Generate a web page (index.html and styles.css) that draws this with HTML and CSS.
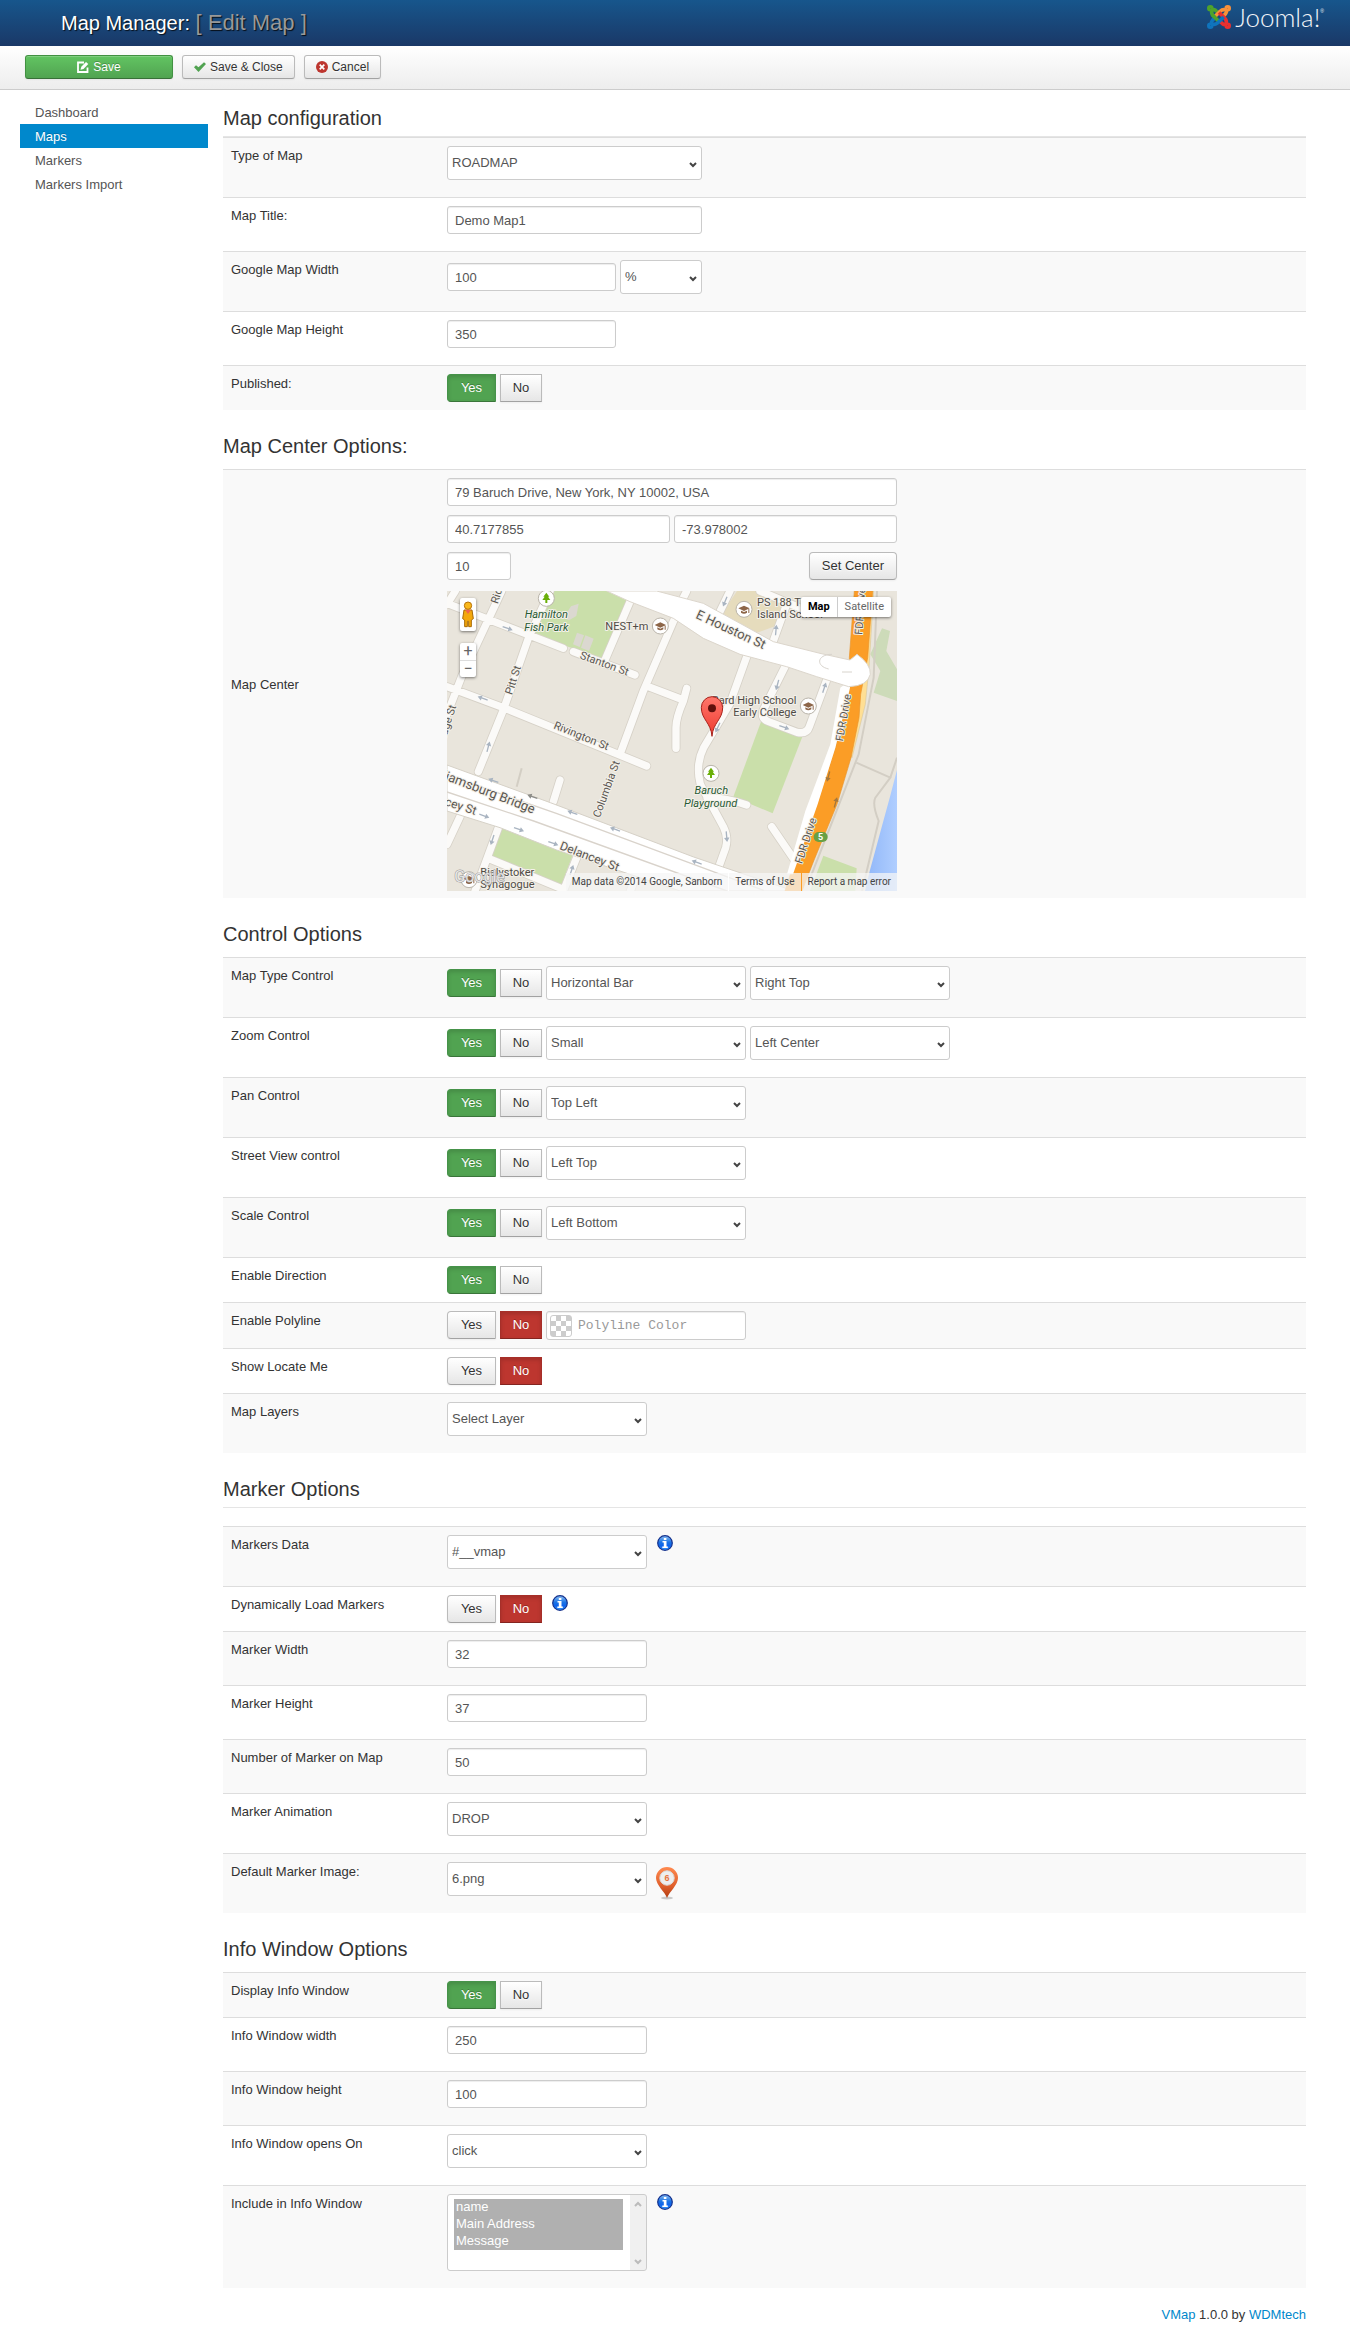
FILE: index.html
```html
<!DOCTYPE html>
<html lang="en">
<head>
<meta charset="utf-8">
<meta name="viewport" content="width=device-width, initial-scale=1">
<title>Map Manager: Edit Map</title>
<link rel="stylesheet" href="styles.css">
</head>
<body>
<header class="header">
  <h1 class="title">Map Manager: <small>[ Edit Map ]</small></h1>
  <a class="logo" href="#" aria-label="Joomla!">
    <svg class="logo-mark" viewBox="0 0 24 24" width="24" height="24" fill="none" stroke-width="3.6" stroke-linejoin="round" aria-hidden="true">
      <g stroke="#4fa32b"><circle cx="3.300" cy="3.300" r="1.500"/><path d="M10.500 7L8.500 5.300Q6 3.500 4.900 5.500Q4 8.500 6.200 10.800L12 16.600"/></g>
      <g stroke="#f9913a" transform="rotate(90 12 12)"><circle cx="3.300" cy="3.300" r="1.500"/><path d="M10.500 7L8.500 5.300Q6 3.500 4.900 5.500Q4 8.500 6.200 10.800L12 16.600"/></g>
      <g stroke="#e9302f" transform="rotate(180 12 12)"><circle cx="3.300" cy="3.300" r="1.500"/><path d="M10.500 7L8.500 5.300Q6 3.500 4.900 5.500Q4 8.500 6.200 10.800L12 16.600"/></g>
      <g stroke="#0f74bd" transform="rotate(270 12 12)"><circle cx="3.300" cy="3.300" r="1.500"/><path d="M10.500 7L8.500 5.300Q6 3.500 4.900 5.500Q4 8.500 6.200 10.800L12 16.600"/></g>
      <path stroke="#4fa32b" d="M5.500 10L9 13.600"/>
    </svg>
    <span class="logo-text">Joomla!</span><span class="logo-reg">®</span>
  </a>
</header>

<div class="toolbar">
  <button class="btn btn-small btn-success btn-save" type="button">
    <svg viewBox="0 0 12 12" width="12" height="12" aria-hidden="true"><path d="M7 1.500H1V11h9.500V6.500" fill="none" stroke="#fff" stroke-width="1.800"/><path d="M3.500 8.800l.8-3L9 1l2.300 2-4.800 5z" fill="#fff"/></svg>
    Save
  </button>
  <button class="btn btn-small" type="button">
    <svg viewBox="0 0 12 12" width="12" height="12" aria-hidden="true"><path d="M0 6.300l2-2 2.500 2L10 1.300l2 1.700-7.500 8z" fill="#51a351"/></svg>
    Save &amp; Close
  </button>
  <button class="btn btn-small" type="button">
    <svg viewBox="0 0 12 12" width="12" height="12" aria-hidden="true"><circle cx="6" cy="6" r="6" fill="#bd362f"/><path d="M3.700 3.700l4.600 4.600M8.300 3.700L3.700 8.300" stroke="#fff" stroke-width="1.700"/></svg>
    Cancel
  </button>
</div>

<div class="container">
  <nav class="sidebar">
    <a href="#">Dashboard</a>
    <a href="#" class="active" aria-current="page">Maps</a>
    <a href="#">Markers</a>
    <a href="#">Markers Import</a>
  </nav>

  <main class="main">
    <form>
      <section>
        <h2 class="legend legend-first">Map configuration</h2>
        <div class="row"><label class="name" for="maptype">Type of Map</label>
          <div class="field"><select id="maptype" class="w-large"><option>ROADMAP</option></select></div></div>
        <div class="row"><label class="name" for="maptitle">Map Title:</label>
          <div class="field"><input id="maptitle" class="w-large" type="text" value="Demo Map1"></div></div>
        <div class="row"><label class="name" for="mapwidth">Google Map Width</label>
          <div class="field"><input id="mapwidth" class="w-mid" type="text" value="100"><select class="w-unit" aria-label="Width unit"><option>%</option></select></div></div>
        <div class="row"><label class="name" for="mapheight">Google Map Height</label>
          <div class="field"><input id="mapheight" class="w-mid" type="text" value="350"></div></div>
        <div class="row"><span class="name" id="l-pub">Published:</span>
          <div class="field field-tight"><div class="switch" role="radiogroup" aria-labelledby="l-pub">
            <input type="radio" name="pub" id="pub1" checked><label class="btn yes" for="pub1">Yes</label>
            <input type="radio" name="pub" id="pub0"><label class="btn no" for="pub0">No</label></div></div></div>
      </section>

      <section>
        <h2 class="legend">Map Center Options:</h2>
        <div class="row row-center"><label class="name" for="address">Map Center</label>
          <div class="field center-field">
            <input id="address" type="text" value="79 Baruch Drive, New York, NY 10002, USA">
            <div class="pair">
              <input type="text" aria-label="Latitude" value="40.7177855">
              <input type="text" aria-label="Longitude" value="-73.978002">
            </div>
            <div class="between">
              <input class="w-zoom" type="text" aria-label="Zoom level" value="10">
              <button class="btn" type="button">Set Center</button>
            </div>
            <div class="map">
              <svg class="map-canvas" viewBox="0 0 1350 900" role="img" aria-label="Map of the Lower East Side">
                <defs>
                  <g id="arrow"><path d="M-16 -2H3V-8L16 0L3 8V2H-16Z"/></g>
                  <g id="tree"><circle r="24" fill="#fff" stroke="#b9b4aa" stroke-width="3"/><path d="M0-17L9-5H5L12 5H3V14H-3V5H-12L-5-5H-9Z" fill="#6aaf08"/></g>
                  <g id="school"><circle r="24" fill="#fff" stroke="#b9b4aa" stroke-width="3"/><path d="M-17-3L0-11L17-3L0 5ZM-9 4L0 8L9 4V10Q0 16-9 10ZM13-1H16V11H13Z" fill="#8d6649"/></g>
                  <linearGradient id="sea" x1="0" x2="1"><stop offset="0" stop-color="#8fb6f8"/><stop offset="1" stop-color="#b0ceff"/></linearGradient>
                  <linearGradient id="pin" x1="0" x2="0" y1="0" y2="1"><stop offset="0" stop-color="#ff776b"/><stop offset="1" stop-color="#ee3a30"/></linearGradient>
                </defs>
                <rect width="1350" height="900" fill="#e9e5dc"/>
                <g fill="#cadfaa">
                  <path d="M309 0H479L539 27L469 202L249 130Z"/>
                  <path d="M944 387L1066 437L977 667L859 617Z"/>
                  <path d="M164 707L379 787L344 880L129 797Z"/>
                  <path d="M1129 794L1229 832L1225 900H1089Z"/>
                  <path d="M1305 112L1329 120L1318 180L1350 235V330L1280 305L1300 240L1270 190Z" fill="#cddbb9"/>
                </g>
                <path d="M870 0H945L1030 40L1000 100L930 125L820 75Z" fill="#e6dcbd"/>
                <path d="M372 46L395 38L388 75L366 88L350 80ZM390 125L411 133L398 168L378 160ZM415 133L440 143L426 180L402 170Z" fill="#dbd8d0"/>
                <path d="M1350 537L1329 617L1299 727L1269 837L1254 900H1350Z" fill="url(#sea)"/>
                <g fill="none" stroke="#d3cec4" stroke-width="6">
                  <path d="M224 532L209 587"/>
                  <path d="M1228 515L1330 560L1285 620Q1275 640 1295 690L1245 900M1330 560L1350 500"/>
                  <path d="M1290 0L1280 260L1235 490L1090 860"/>
                </g>
                <path id="streets" fill="none" stroke="#d6d1c7" stroke-width="27" stroke-linecap="round" stroke-linejoin="round" d="M0 37L349 172M379 182L564 252M164 0L44 257L0 370M309 0L244 142L169 357L94 542M25 0L0 40M0 287L169 350L599 525M549 32L474 207M684 80L589 300L519 490M604 287L709 327M719 292L709 330Q687 380 687 410V472M899 197L849 337L770 470Q745 520 760 580L829 707Q845 740 836 770L814 832M780 620Q840 620 899 642M1014 227L949 357Q940 382 965 392L1050 424Q1080 430 1087 407L1139 267M849 0L809 82M719 0L704 30M939 0L1069 55M1019 40L979 150M974 707L1049 817M339 567L319 632M39 677L0 760M159 697L84 900M124 802L349 895M389 800L349 900M565 860L550 900"/>
                <path fill="none" stroke="#fbfaf8" stroke-width="22" stroke-linecap="round" stroke-linejoin="round" d="M0 37L349 172M379 182L564 252M164 0L44 257L0 370M309 0L244 142L169 357L94 542M25 0L0 40M0 287L169 350L599 525M549 32L474 207M684 80L589 300L519 490M604 287L709 327M719 292L709 330Q687 380 687 410V472M899 197L849 337L770 470Q745 520 760 580L829 707Q845 740 836 770L814 832M780 620Q840 620 899 642M1014 227L949 357Q940 382 965 392L1050 424Q1080 430 1087 407L1139 267M849 0L809 82M719 0L704 30M939 0L1069 55M1019 40L979 150M974 707L1049 817M339 567L319 632M39 677L0 760M159 697L84 900M124 802L349 895M389 800L349 900M565 860L550 900"/>
                <path d="M0 522L310 635L740 798L1040 900H700L329 777L159 710L0 660Z" fill="#fff" stroke="#d6d1c7" stroke-width="3"/>
                <g fill="none" stroke="#d9d3cb" stroke-width="4"><path d="M0 552L330 668L950 898M0 603L260 690L840 900"/></g>
                <path d="M1262 0H1280L1266 230L1255 340L1215 500L1205 480L1240 300Z" fill="#ffdf94" stroke="#d9c9a0" stroke-width="2"/>
                <path d="M1222 0H1277L1262 200L1241 310L1236 380L1212 500L1170 640L1100 810L1065 900H1014L1030 850L1110 640L1165 470L1207 300V200Z" fill="#fb9d26" stroke="#e8962f" stroke-width="2"/>
                <path d="M1207 270L1180 290L1150 460L1075 660L1020 850H1038L1112 640L1165 470L1209 290Z" fill="#fff"/>
                <path d="M479 0H629L769 37L879 97L979 152L1119 187L1209 207L1230 190Q1272 220 1270 250Q1262 285 1205 287L1109 257L1019 227L879 190L769 142L679 82L549 32Z" fill="#fff" stroke="#dcd6cc" stroke-width="3"/>
                <path d="M1155 190C1110 190 1105 225 1145 234M1185 243H1215" fill="none" stroke="#d8d4cd" stroke-width="3"/>
                <g fill="#a9b4c1">
                  <use href="#arrow" transform="translate(182 112) rotate(20)"/><use href="#arrow" transform="translate(107 322) rotate(200)"/>
                  <use href="#arrow" transform="translate(124 467) rotate(-75)"/><use href="#arrow" transform="translate(139 569) rotate(200)"/>
                  <use href="#arrow" transform="translate(256 617) rotate(200)" fill="#8c8c88"/><use href="#arrow" transform="translate(376 665) rotate(200)"/>
                  <use href="#arrow" transform="translate(504 715) rotate(200)"/><use href="#arrow" transform="translate(749 814) rotate(200)"/>
                  <use href="#arrow" transform="translate(112 675) rotate(20)"/><use href="#arrow" transform="translate(216 715) rotate(20)"/>
                  <use href="#arrow" transform="translate(319 757) rotate(20)"/><use href="#arrow" transform="translate(136 747) rotate(108)"/>
                  <use href="#arrow" transform="translate(374 837) rotate(-72)"/><use href="#arrow" transform="translate(839 737) rotate(85)"/>
                  <use href="#arrow" transform="translate(812 410) rotate(115)"/><use href="#arrow" transform="translate(834 32) rotate(112)"/>
                  <use href="#arrow" transform="translate(987 117) rotate(-85)"/><use href="#arrow" transform="translate(991 282) rotate(105)"/>
                  <use href="#arrow" transform="translate(1132 290) rotate(-72)"/><use href="#arrow" transform="translate(1012 409) rotate(20)"/>
                  <use href="#arrow" transform="translate(1144 557) rotate(105)" fill="#a5773c"/><use href="#arrow" transform="translate(1166 634) rotate(-75)" fill="#a5773c"/>
                </g>
                <g class="street">
                  <text transform="translate(744 80) rotate(25)" class="major">E Houston St</text>
                  <text transform="translate(397 202) rotate(20)">Stanton St</text>
                  <text transform="translate(195 313) rotate(-72)">Pitt St</text>
                  <text transform="translate(152 40) rotate(-72)">Ridge St</text>
                  <text transform="translate(318 412) rotate(22)">Rivington St</text>
                  <text transform="translate(458 682) rotate(-70)">Columbia St</text>
                  <text transform="translate(28 346) rotate(-72)" text-anchor="end">Ridge St</text>
                  <text transform="translate(1188 452) rotate(-80)">FDR Drive</text>
                  <text transform="translate(1065 820) rotate(-72)">FDR Drive</text>
                  <text transform="translate(1246 132) rotate(-86)">FDR Drive</text>
                  <text transform="translate(258 668) rotate(21)" text-anchor="end" class="major">Williamsburg Bridge</text>
                  <text transform="translate(84 672) rotate(18)" text-anchor="end" class="big">Delancey St</text>
                  <text transform="translate(336 774) rotate(21)" class="big">Delancey St</text>
                </g>
                <g class="place">
                  <text x="475" y="116">NEST+m</text>
                  <text x="930" y="46">PS 188 The</text>
                  <text x="930" y="82">Island School</text>
                  <text x="1048" y="338" text-anchor="end">Bard High School</text>
                  <text x="1048" y="376" text-anchor="end">Early College</text>
                  <text x="100" y="854">Bialystoker</text>
                  <text x="100" y="891">Synagogue</text>
                </g>
                <g class="park">
                  <text x="298" y="82" text-anchor="middle">Hamilton</text>
                  <text x="298" y="121" text-anchor="middle">Fish Park</text>
                  <text x="793" y="608" text-anchor="middle">Baruch</text>
                  <text x="791" y="647" text-anchor="middle">Playground</text>
                </g>
                <use href="#tree" x="298" y="22"/><use href="#tree" x="792" y="547"/>
                <use href="#school" x="640" y="105"/><use href="#school" x="891" y="55"/><use href="#school" x="1084" y="345"/><use href="#school" x="66" y="866"/>
                <text x="22" y="873" class="watermark">Google</text>
                <rect x="1100" y="723" width="42" height="30" rx="15" fill="#68a044"/>
                <text x="1121" y="747" text-anchor="middle" class="shield">5</text>
                <path d="M795 436C792 395 763 385 763 350A32 33 0 0 1 827 350C827 385 798 395 795 436Z" fill="url(#pin)" stroke="#a8231c" stroke-width="3"/>
                <circle cx="795" cy="352" r="12" fill="#60100c"/>
              </svg>
              <div class="map-ctl pegman">
                <svg viewBox="0 0 42 84" width="14" height="28" aria-hidden="true"><path d="M9 30H33L37 56L31 60V80H23V64H19V80H11V60L5 56Z" fill="#f4a80c" stroke="#a86a05" stroke-width="3"/><path d="M12 29L21 42L30 29Z" fill="#ef6352"/><circle cx="21" cy="17" r="11" fill="#f9b81c" stroke="#b87208" stroke-width="3"/></svg>
              </div>
              <div class="map-ctl zoomer">
                <button type="button" aria-label="Zoom in">+</button>
                <button type="button" aria-label="Zoom out">−</button>
              </div>
              <div class="map-ctl typer"><button type="button" class="on">Map</button><button type="button">Satellite</button></div>
              <div class="map-credit"><span>Map data ©2014 Google, Sanborn</span><a href="#">Terms of Use</a><a href="#" class="report">Report a map error</a></div>
            </div>
          </div></div>
      </section>

      <section>
        <h2 class="legend">Control Options</h2>
        <div class="row"><span class="name" id="l-type">Map Type Control</span>
          <div class="field"><div class="switch" role="radiogroup" aria-labelledby="l-type">
            <input type="radio" name="type" id="type1" checked><label class="btn yes" for="type1">Yes</label>
            <input type="radio" name="type" id="type0"><label class="btn no" for="type0">No</label></div>
            <select aria-label="Map type style"><option>Horizontal Bar</option></select><select aria-label="Map type position"><option>Right Top</option></select></div></div>
        <div class="row"><span class="name" id="l-zoom">Zoom Control</span>
          <div class="field"><div class="switch" role="radiogroup" aria-labelledby="l-zoom">
            <input type="radio" name="zoom" id="zoom1" checked><label class="btn yes" for="zoom1">Yes</label>
            <input type="radio" name="zoom" id="zoom0"><label class="btn no" for="zoom0">No</label></div>
            <select aria-label="Zoom style"><option>Small</option></select><select aria-label="Zoom position"><option>Left Center</option></select></div></div>
        <div class="row"><span class="name" id="l-pan">Pan Control</span>
          <div class="field"><div class="switch" role="radiogroup" aria-labelledby="l-pan">
            <input type="radio" name="pan" id="pan1" checked><label class="btn yes" for="pan1">Yes</label>
            <input type="radio" name="pan" id="pan0"><label class="btn no" for="pan0">No</label></div>
            <select aria-label="Pan position"><option>Top Left</option></select></div></div>
        <div class="row"><span class="name" id="l-sv">Street View control</span>
          <div class="field"><div class="switch" role="radiogroup" aria-labelledby="l-sv">
            <input type="radio" name="sv" id="sv1" checked><label class="btn yes" for="sv1">Yes</label>
            <input type="radio" name="sv" id="sv0"><label class="btn no" for="sv0">No</label></div>
            <select aria-label="Street View position"><option>Left Top</option></select></div></div>
        <div class="row"><span class="name" id="l-scale">Scale Control</span>
          <div class="field"><div class="switch" role="radiogroup" aria-labelledby="l-scale">
            <input type="radio" name="scale" id="scale1" checked><label class="btn yes" for="scale1">Yes</label>
            <input type="radio" name="scale" id="scale0"><label class="btn no" for="scale0">No</label></div>
            <select aria-label="Scale position"><option>Left Bottom</option></select></div></div>
        <div class="row"><span class="name" id="l-dir">Enable Direction</span>
          <div class="field field-tight"><div class="switch" role="radiogroup" aria-labelledby="l-dir">
            <input type="radio" name="dir" id="dir1" checked><label class="btn yes" for="dir1">Yes</label>
            <input type="radio" name="dir" id="dir0"><label class="btn no" for="dir0">No</label></div></div></div>
        <div class="row"><span class="name" id="l-poly">Enable Polyline</span>
          <div class="field field-tight field-top"><div class="switch" role="radiogroup" aria-labelledby="l-poly">
            <input type="radio" name="poly" id="poly1"><label class="btn yes" for="poly1">Yes</label>
            <input type="radio" name="poly" id="poly0" checked><label class="btn no" for="poly0">No</label></div>
            <div class="color"><span class="swatch"></span><input type="text" aria-label="Polyline color" placeholder="Polyline Color"></div></div></div>
        <div class="row"><span class="name" id="l-loc">Show Locate Me</span>
          <div class="field field-tight"><div class="switch" role="radiogroup" aria-labelledby="l-loc">
            <input type="radio" name="loc" id="loc1"><label class="btn yes" for="loc1">Yes</label>
            <input type="radio" name="loc" id="loc0" checked><label class="btn no" for="loc0">No</label></div></div></div>
        <div class="row"><label class="name" for="layers">Map Layers</label>
          <div class="field"><select id="layers"><option>Select Layer</option></select></div></div>
      </section>

      <section>
        <h2 class="legend legend-ruled">Marker Options</h2>
        <div class="row"><label class="name" for="mdata">Markers Data</label>
          <div class="field field-top"><select id="mdata"><option>#__vmap</option></select>
            <svg class="info" viewBox="0 0 16 16" width="16" height="16" aria-hidden="true"><defs><linearGradient id="orb" x1="0" x2="0" y1="0" y2="1"><stop offset="0" stop-color="#8cc0f4"/><stop offset=".45" stop-color="#1c74e4"/><stop offset=".7" stop-color="#0c62ec"/><stop offset="1" stop-color="#3ea0ff"/></linearGradient></defs><circle cx="8" cy="8" r="7.300" fill="url(#orb)" stroke="#15318c" stroke-width="1.200"/><path d="M6.800 3h2.600v2H6.800zM5.500 6h4v5.500h1.300V13H5.300v-1.500h1.500v-4H5.500z" fill="#fff"/></svg></div></div>
        <div class="row"><span class="name" id="l-dyn">Dynamically Load Markers</span>
          <div class="field field-tight field-top"><div class="switch" role="radiogroup" aria-labelledby="l-dyn">
            <input type="radio" name="dyn" id="dyn1"><label class="btn yes" for="dyn1">Yes</label>
            <input type="radio" name="dyn" id="dyn0" checked><label class="btn no" for="dyn0">No</label></div>
            <svg class="info" viewBox="0 0 16 16" width="16" height="16" aria-hidden="true"><circle cx="8" cy="8" r="7.300" fill="url(#orb)" stroke="#15318c" stroke-width="1.200"/><path d="M6.800 3h2.600v2H6.800zM5.500 6h4v5.500h1.300V13H5.300v-1.500h1.500v-4H5.500z" fill="#fff"/></svg></div></div>
        <div class="row"><label class="name" for="mw">Marker Width</label>
          <div class="field"><input id="mw" type="text" value="32"></div></div>
        <div class="row"><label class="name" for="mh">Marker Height</label>
          <div class="field"><input id="mh" type="text" value="37"></div></div>
        <div class="row"><label class="name" for="mn">Number of Marker on Map</label>
          <div class="field"><input id="mn" type="text" value="50"></div></div>
        <div class="row"><label class="name" for="ma">Marker Animation</label>
          <div class="field"><select id="ma"><option>DROP</option></select></div></div>
        <div class="row"><label class="name" for="mi">Default Marker Image:</label>
          <div class="field"><select id="mi"><option>6.png</option></select>
            <svg class="pin" viewBox="0 0 22 33" width="22" height="33" role="img" aria-label="Marker 6"><defs><linearGradient id="pinfill" x1="0" x2="0" y1="0" y2="1"><stop offset="0" stop-color="#ff8a50"/><stop offset=".6" stop-color="#e0602c"/><stop offset="1" stop-color="#b03c12"/></linearGradient></defs><ellipse cx="11" cy="31" rx="6" ry="1.500" fill="#c9c9c9"/><path d="M11 31C9 25 0 18 0 11A11 11 0 0 1 22 11C22 18 13 25 11 31Z" fill="url(#pinfill)"/><circle cx="11" cy="11" r="7.200" fill="#eee" stroke="#d9d9d9"/><text x="11" y="14" text-anchor="middle" class="pin-no">6</text></svg></div></div>
      </section>

      <section>
        <h2 class="legend">Info Window Options</h2>
        <div class="row"><span class="name" id="l-iw">Display Info Window</span>
          <div class="field field-tight"><div class="switch" role="radiogroup" aria-labelledby="l-iw">
            <input type="radio" name="iw" id="iw1" checked><label class="btn yes" for="iw1">Yes</label>
            <input type="radio" name="iw" id="iw0"><label class="btn no" for="iw0">No</label></div></div></div>
        <div class="row"><label class="name" for="iww">Info Window width</label>
          <div class="field"><input id="iww" type="text" value="250"></div></div>
        <div class="row"><label class="name" for="iwh">Info Window height</label>
          <div class="field"><input id="iwh" type="text" value="100"></div></div>
        <div class="row"><label class="name" for="iwo">Info Window opens On</label>
          <div class="field"><select id="iwo"><option>click</option></select></div></div>
        <div class="row"><label class="name" for="iwi">Include in Info Window</label>
          <div class="field field-top"><select id="iwi" multiple size="4"><option selected>name</option><option selected>Main Address</option><option selected>Message</option></select>
            <svg class="info" viewBox="0 0 16 16" width="16" height="16" aria-hidden="true"><circle cx="8" cy="8" r="7.300" fill="url(#orb)" stroke="#15318c" stroke-width="1.200"/><path d="M6.800 3h2.600v2H6.800zM5.500 6h4v5.500h1.300V13H5.300v-1.500h1.500v-4H5.500z" fill="#fff"/></svg></div></div>
      </section>
    </form>
    <footer class="footer"><a href="#">VMap</a> 1.0.0 by <a href="#">WDMtech</a></footer>
  </main>
</div>
</body>
</html>
```
FILE: styles.css
```css
* { box-sizing: border-box; }

body {
  margin: 0;
  background: #fff;
  color: #333;
  font: 13px/18px "Liberation Sans", Arial, sans-serif;
}

a { color: #08c; text-decoration: none; }

input, select, button { font: inherit; margin: 0; }

/* Header */
.header {
  display: flex;
  justify-content: space-between;
  align-items: center;
  height: 46px;
  padding: 0 26px 0 61px;
  background: linear-gradient(#17568c, #1a3867);
}

.title {
  margin: 0;
  color: #fff;
  font-size: 20px;
  font-weight: normal;
  line-height: 46px;
  text-shadow: 1px 1px 1px rgba(0, 0, 0, .8);
}

.title small { color: #999; font-size: 22px; }

.logo {
  display: flex;
  align-items: center;
  height: 24px;
  margin-bottom: 12px;
  color: #f2f5f9;
}

.logo-text {
  margin-left: 4px;
  font: 300 26px/24px Lato, sans-serif;
}

.logo-reg { align-self: flex-start; font-size: 5px; line-height: 12px; }

/* Toolbar */
.toolbar {
  display: flex;
  gap: 9px;
  padding: 9px 25px 10px;
  background: linear-gradient(#fff, #ededed);
  border-bottom: 1px solid #ccc;
}

.btn {
  display: inline-flex;
  align-items: center;
  justify-content: center;
  gap: 4px;
  height: 28px;
  padding: 0 12px;
  border: 1px solid #bbb;
  border-bottom-color: #a2a2a2;
  border-radius: 4px;
  background: linear-gradient(#fff, #e6e6e6);
  box-shadow: inset 0 1px 0 rgba(255, 255, 255, .2), 0 1px 2px rgba(0, 0, 0, .05);
  color: #333;
  text-shadow: 0 1px 1px rgba(255, 255, 255, .75);
  cursor: pointer;
}

.btn-small { height: 24px; padding: 0 11px; border-radius: 3px; font-size: 12px; }

.btn-success {
  border-color: #429142 #429142 #387038;
  background: linear-gradient(#62c462, #51a351);
  color: #fff;
  text-shadow: 0 -1px 0 rgba(0, 0, 0, .25);
}

.btn-save { width: 148px; }

/* Page columns */
.container {
  display: flex;
  gap: 15px;
  padding: 10px 44px 18px 20px;
}

.sidebar { flex: 0 0 188px; }

.sidebar a {
  display: block;
  padding: 4px 15px 2px;
  color: #555;
}

.sidebar .active {
  background: #08c;
  color: #fff;
  text-shadow: 0 -1px 0 rgba(0, 0, 0, .2);
}

.main { flex: 1; min-width: 0; }

.legend {
  margin: 18px 0 5px;
  font-size: 20px;
  font-weight: normal;
  line-height: 36px;
}

.legend-first { margin: 0; border-bottom: 1px solid #e5e5e5; }
.legend-ruled { margin-bottom: 18px; border-bottom: 1px solid #e5e5e5; }

/* Setting rows */
.row {
  display: grid;
  grid-template-columns: 216px 1fr;
  border-top: 1px solid #ddd;
}

.row:nth-of-type(odd) { background: #f9f9f9; }

.name { padding: 9px 8px 7px; }

.field {
  display: flex;
  align-items: center;
  gap: 4px;
  padding: 8px 8px 17px;
}

.field-tight { padding-bottom: 8px; }
.field-top { align-items: flex-start; }

input[type="text"] {
  width: 200px;
  height: 28px;
  padding: 4px 7px;
  border: 1px solid #ccc;
  border-radius: 3px;
  background: #fff;
  box-shadow: inset 0 1px 1px rgba(0, 0, 0, .075);
  color: #555;
}

select {
  appearance: none;
  width: 200px;
  height: 34px;
  padding: 4px;
  border: 1px solid #ccc;
  border-radius: 3px;
  background: #fff url("data:image/svg+xml,%3Csvg xmlns='http://www.w3.org/2000/svg' width='8' height='6'%3E%3Cpath d='M1 1l3 3 3-3' fill='none' stroke='%23444' stroke-width='2'/%3E%3C/svg%3E") no-repeat right 4px top 15px;
  color: #555;
}

/* List box with an always-visible scroll track */
select[multiple] {
  height: 77px;
  padding: 4px 23px 4px 6px;
  overflow: hidden;
  background:
    url("data:image/svg+xml,%3Csvg xmlns='http://www.w3.org/2000/svg' width='8' height='6'%3E%3Cpath d='M1 5l3-3 3 3' fill='none' stroke='%23bbb' stroke-width='2'/%3E%3C/svg%3E") no-repeat right 4px top 6px,
    url("data:image/svg+xml,%3Csvg xmlns='http://www.w3.org/2000/svg' width='8' height='6'%3E%3Cpath d='M1 1l3 3 3-3' fill='none' stroke='%23bbb' stroke-width='2'/%3E%3C/svg%3E") no-repeat right 4px bottom 5px,
    linear-gradient(#f0f0f0, #f0f0f0) no-repeat right / 16px 100%,
    #fff;
}

select[multiple] option {
  min-height: 17px;
  padding: 0 2px;
  line-height: 17px;
}

select[multiple] option:checked {
  background: #b0b0b0 linear-gradient(#b0b0b0, #b0b0b0);
  color: #fff;
}

input.w-large, select.w-large { width: 255px; }
input.w-mid { width: 169px; }
select.w-unit { width: 82px; }
input.w-zoom { width: 64px; }

/* Yes / No switch */
.switch { display: flex; gap: 4px; position: relative; }
.switch input { position: absolute; opacity: 0; }
.switch .btn { border-radius: 0; }
.switch .yes { width: 49px; border-radius: 4px 0 0 4px; }
.switch .no { width: 42px; }

.switch input:checked + .btn {
  color: #fff;
  box-shadow: inset 0 2px 4px rgba(0, 0, 0, .15);
  text-shadow: 0 -1px 0 rgba(0, 0, 0, .25);
}
.switch input:checked + .yes { border-color: #46934a #46934a #3a753a; background: #51a351; }
.switch input:checked + .no { border-color: #a62f29 #a62f29 #842520; background: #bd362f; }

/* Polyline colour box */
.color {
  display: flex;
  align-items: center;
  width: 200px;
  height: 29px;
  padding: 0 3px;
  border: 1px solid #ccc;
  border-radius: 3px;
  background: #fff;
  box-shadow: inset 0 1px 1px rgba(0, 0, 0, .075);
}

.swatch {
  flex: 0 0 22px;
  height: 22px;
  border: 1px solid #ccc;
  border-radius: 3px;
  background: repeating-conic-gradient(#ccc 0 25%, #fff 0 50%) 0 0 / 10px 10px;
}

.color input[type="text"] {
  flex: 1;
  width: 100%;
  min-width: 0;
  border: 0;
  padding: 0 6px;
  background: none;
  box-shadow: none;
  font: 13px/18px "Liberation Mono", monospace;
}

.color input::placeholder { color: #999; opacity: 1; }

.info { margin-left: 6px; }
.pin { margin: 4px 0 -5px 5px; }
.pin-no { fill: #e8743c; font: bold 9px "Liberation Sans", sans-serif; }

/* Map centre */
.row-center { align-items: center; }

.center-field {
  flex-direction: column;
  align-items: stretch;
  gap: 9px;
  max-width: 466px;
  padding-bottom: 7px;
}

.center-field > input[type="text"] { width: 100%; }
.pair { display: flex; gap: 4px; }
.pair input[type="text"] { flex: 1; min-width: 0; }
.between { display: flex; justify-content: space-between; }

.map {
  position: relative;
  margin-top: 2px;
  overflow: hidden;
  font: 11px/18px Roboto, sans-serif;
}

.map-canvas { display: block; width: 100%; height: auto; font-family: Roboto, sans-serif; }
.map-canvas text { font-size: 33px; paint-order: stroke; stroke: #f4f1ea; stroke-width: 6px; stroke-linejoin: round; }
.map-canvas .big { font-size: 36px; }
.map-canvas .major { font-size: 39px; }
.street { fill: #5b5752; }
.place { fill: #4f4b46; }
.park { fill: #285a35; font-style: italic; }
.map-canvas .shield { fill: #fff; stroke: none; font-size: 27px; font-weight: bold; }
.map-canvas .watermark { fill: #fff; fill-opacity: .7; stroke: #999; stroke-width: 3px; font-size: 48px; }

.map-ctl {
  position: absolute;
  background: #fff;
  border-radius: 2px;
  box-shadow: 0 1px 3px rgba(0, 0, 0, .5);
}

.map-ctl button {
  border: 0;
  padding: 0;
  background: none;
  color: #666;
}

.pegman { left: 13px; top: 7px; width: 16px; height: 33px; padding: 2px 1px; }
.zoomer { left: 13px; top: 52px; display: flex; flex-direction: column; width: 16px; height: 34px; }
.zoomer button { flex: 1; font-size: 16px; line-height: 16px; }
.zoomer button + button { border-top: 1px solid #ddd; }
.typer { right: 6px; top: 6px; display: flex; height: 20px; }
.typer button { padding: 0 7px; }
.typer button + button { border-left: 1px solid #ccc; }
.typer .on { color: #000; font-weight: bold; }

.map-credit {
  position: absolute;
  right: 0;
  bottom: 0;
  display: flex;
  background: rgba(245, 245, 245, .75);
  color: #444;
  font-size: 10px;
  line-height: 18px;
}

.map-credit span, .map-credit a { padding: 0 6px; color: #444; }
.map-credit a { border-left: 1px solid #fff; }
.map-credit .report { border-left-color: #fb9d26; }

.footer { padding-top: 18px; text-align: right; }
```
